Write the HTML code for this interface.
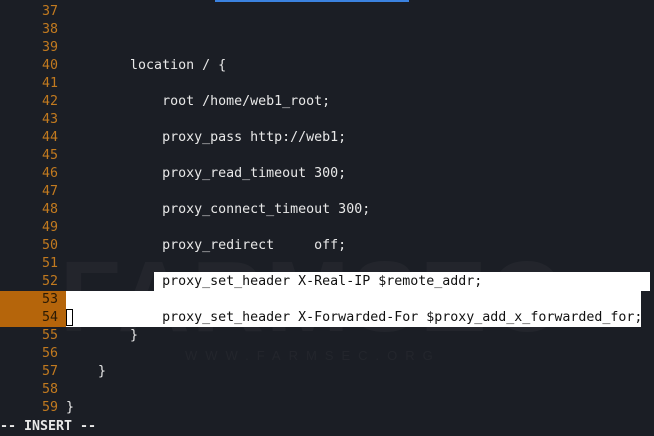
<!DOCTYPE html><html><head><style>
body{margin:0;width:654px;height:426px;background:#1b1e25;overflow:hidden;position:relative;font-family:"DejaVu Sans Mono","Liberation Mono",monospace;font-size:13.3px;}
.r{position:absolute;left:0;height:18px;line-height:18px;white-space:pre;color:#e8e8e8;}
.n{position:absolute;left:0;width:58px;text-align:right;color:#c27a1f;}
.t{position:absolute;left:66px;}
.sel{position:absolute;background:#fff;}
.wm{position:absolute;color:rgba(255,255,255,0.035);font-family:"Liberation Sans",sans-serif;font-weight:bold;}
</style></head><body>
<div style="position:absolute;left:215px;top:0;width:194px;height:2px;background:#3b82e0"></div>
<div class="wm" style="left:60px;top:240px;font-size:100px;letter-spacing:2px">FARMSEC</div>
<div class="wm" style="left:185px;top:348px;font-size:13px;letter-spacing:8px;font-weight:normal">WWW.FARMSEC.ORG</div>
<div class="sel" style="left:154px;top:272px;width:496px;height:19px"></div>
<div class="sel" style="left:66px;top:291px;width:575px;height:36px"></div>
<div style="position:absolute;left:0;top:291px;width:66px;height:36px;background:#b5650b"></div>
<div style="position:absolute;left:66px;top:309px;width:7px;height:17px;border:1px solid #000;box-sizing:border-box;background:#fff"></div>
<div class="r" style="top:3px"><span class="n">37</span></div>
<div class="r" style="top:21px"><span class="n">38</span></div>
<div class="r" style="top:39px"><span class="n">39</span></div>
<div class="r" style="top:57px"><span class="n">40</span><span class="t">        location / {</span></div>
<div class="r" style="top:75px"><span class="n">41</span></div>
<div class="r" style="top:93px"><span class="n">42</span><span class="t">            root /home/web1_root;</span></div>
<div class="r" style="top:111px"><span class="n">43</span></div>
<div class="r" style="top:129px"><span class="n">44</span><span class="t">            proxy_pass http://web1;</span></div>
<div class="r" style="top:147px"><span class="n">45</span></div>
<div class="r" style="top:165px"><span class="n">46</span><span class="t">            proxy_read_timeout 300;</span></div>
<div class="r" style="top:183px"><span class="n">47</span></div>
<div class="r" style="top:201px"><span class="n">48</span><span class="t">            proxy_connect_timeout 300;</span></div>
<div class="r" style="top:219px"><span class="n">49</span></div>
<div class="r" style="top:237px"><span class="n">50</span><span class="t">            proxy_redirect     off;</span></div>
<div class="r" style="top:255px"><span class="n">51</span></div>
<div class="r" style="top:273px"><span class="n">52</span><span class="t" style="color:#111">            proxy_set_header X-Real-IP $remote_addr;</span></div>
<div class="r" style="top:291px"><span class="n" style="color:#2a1a05">53</span></div>
<div class="r" style="top:309px"><span class="n" style="color:#2a1a05">54</span><span class="t" style="color:#111">            proxy_set_header X-Forwarded-For $proxy_add_x_forwarded_for;</span></div>
<div class="r" style="top:327px"><span class="n">55</span><span class="t">        }</span></div>
<div class="r" style="top:345px"><span class="n">56</span></div>
<div class="r" style="top:363px"><span class="n">57</span><span class="t">    }</span></div>
<div class="r" style="top:381px"><span class="n">58</span></div>
<div class="r" style="top:399px"><span class="n">59</span><span class="t">}</span></div>
<div class="r" style="top:418px;font-weight:bold"><span style="position:absolute;left:0">-- INSERT --</span></div>
</body></html>
